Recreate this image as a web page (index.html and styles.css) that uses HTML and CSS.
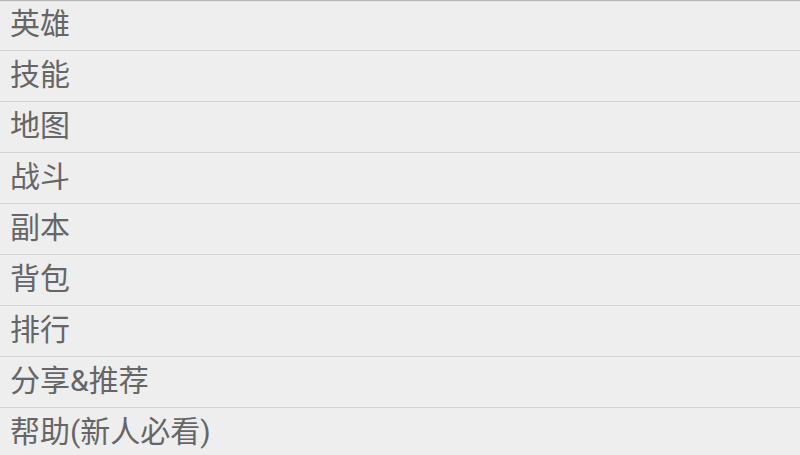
FILE: index.html
```html
<!DOCTYPE html>
<html lang="zh-CN">
<head>
  <meta charset="UTF-8" />
  <meta name="viewport" content="width=device-width, initial-scale=1.0"/>
  <title>菜单</title>
  <link rel="stylesheet" href="styles.css">
</head>
<body>

  <ul class="menu-list">
    <li class="menu-item">英雄</li>
    <li class="menu-item">技能</li>
    <li class="menu-item">地图</li>
    <li class="menu-item">战斗</li>
    <li class="menu-item">副本</li>
    <li class="menu-item">背包</li>
    <li class="menu-item">排行</li>
    <li class="menu-item">分享&amp;推荐</li>
    <li class="menu-item">帮助(新人必看)</li>
  </ul>

</body>
</html>
```

FILE: styles.css
```css
html, body {
  margin: 0;
  padding: 0;
  height: 100%;
  overflow: hidden;
}

body {
  font-family: Roboto, "Noto Sans CJK SC", sans-serif;
  background: #eeeeee;
  color: #666666;
}

.menu-list {
  list-style: none;
  margin: 0;
  padding: 0;
  box-shadow: inset 0 1px 0 #b8b8b8, inset 0 2px 0 #e4e4e4;
}

.menu-item {
  display: flex;
  align-items: center;
  box-sizing: content-box;
  height: 42px;
  padding: 0 0 8px 10px;
  font-size: 30px;
  border-bottom: 1px solid #d2d2d2;
}
```
